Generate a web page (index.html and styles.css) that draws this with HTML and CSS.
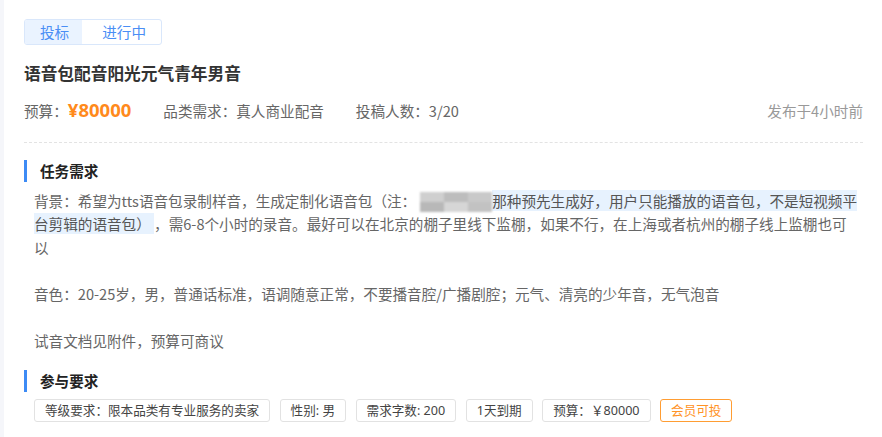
FILE: index.html
```html
<!DOCTYPE html>
<html lang="zh-CN">

<head>
    <meta charset="UTF-8">
    <meta name="viewport" content="width=device-width, initial-scale=1.0">
    <title>任务详情</title>
    <link rel="stylesheet" href="styles.css">
</head>

<body>
    <div class="card">
        <div class="tabs">
            <span class="tab active">投标</span>
            <span class="tab">进行中</span>
        </div>

        <h1 class="title">语音包配音阳光元气青年男音</h1>

        <div class="meta">
            <span class="meta-item">预算：<b class="price">¥80000</b></span>
            <span class="meta-item">品类需求：真人商业配音</span>
            <span class="meta-item">投稿人数：3/20</span>
            <span class="posted">发布于4小时前</span>
        </div>

        <h2 class="section-title">任务需求</h2>
        <div class="desc">
            <p>背景：希望为tts语音包录制样音，生成定制化语音包（注：<span class="mosaic"></span><span class="mark">那种预先生成好，用户只能播放的语音包，不是短视频平台剪辑的语音包）&nbsp;</span>，需6-8个小时的录音。最好可以在北京的棚子里线下监棚，如果不行，在上海或者杭州的棚子线上监棚也可以</p>
            <p>音色：20-25岁，男，普通话标准，语调随意正常，不要播音腔/广播剧腔；元气、清亮的少年音，无气泡音</p>
            <p>试音文档见附件，预算可商议</p>
        </div>

        <h2 class="section-title">参与要求</h2>
        <div class="tags">
            <span class="tag">等级要求：限本品类有专业服务的卖家</span>
            <span class="tag">性别: 男</span>
            <span class="tag">需求字数: 200</span>
            <span class="tag">1天到期</span>
            <span class="tag">预算：￥80000</span>
            <span class="tag vip">会员可投</span>
        </div>
    </div>
</body>

</html>
```

FILE: styles.css
```css
body {
    margin: 0;
    background-color: #f5f6fa;
    font-family: "Noto Sans CJK SC", sans-serif;
    color: #666;
}

.card {
    margin-left: 4px;
    min-height: 437px;
    box-sizing: border-box;
    background-color: #fff;
    padding: 19px 19px 0 20px;
}

.tabs {
    display: inline-flex;
    border: 1px solid #d9e7fb;
    border-radius: 3px;
    overflow: hidden;
}

.tab {
    font-size: 14.6px;
    line-height: 24px;
    color: #4a8ef5;
    padding: 0 15px 0 20px;
}

.tab.active {
    background-color: #eaf3ff;
    padding: 0 13px 0 15px;
}

.title {
    margin: 16px 0 0;
    font-size: 16.7px;
    line-height: 24px;
    font-weight: bold;
    color: #333;
}

.meta {
    display: flex;
    align-items: center;
    gap: 32px;
    margin-top: 13px;
    padding-bottom: 19px;
    border-bottom: 1px dashed #e3e3e3;
    font-size: 14.6px;
    line-height: 24px;
}

.meta-item {
    color: #666;
}

.price {
    font-family: "Noto Sans", sans-serif;
    font-size: 18.5px;
    font-weight: bold;
    color: #ff8a1c;
}

.posted {
    margin-left: auto;
    color: #999;
}

.section-title {
    margin: 17px 0 0;
    padding: 3px 0 3px 13px;
    border-left: 3px solid #3d8bf5;
    font-size: 14.6px;
    line-height: 16px;
    font-weight: bold;
    color: #222;
}

.section-title + .desc {
    margin-top: 7px;
}

.desc {
    padding: 0 3px 0 10px;
    font-size: 14.6px;
    line-height: 23.3px;
    color: #666;
}

.desc p {
    margin: 0 0 23.3px;
}

.desc p:last-child {
    margin-bottom: 0;
}

.desc + .section-title {
    margin-top: 18px;
}

/* 打码区域 */
.mosaic {
    display: inline-block;
    width: 72px;
    height: 20px;
    margin-left: 4px;
    vertical-align: -5px;
    background:
        linear-gradient(90deg, #cfcfcf 0 33%, #bdbdbd 33% 66%, #c9c9c9 66%) top / 100% 50% no-repeat,
        linear-gradient(90deg, #b8b8b8 0 33%, #d6d6d6 33% 66%, #c2c2c2 66%) bottom / 100% 50% no-repeat;
    filter: blur(1.2px);
}

.mark {
    background-color: #e7f2fe;
    color: #555;
}

.tags {
    display: flex;
    flex-wrap: wrap;
    gap: 9.5px;
    margin-top: 7px;
    padding-left: 10px;
}

.tag {
    font-family: "Noto Sans", "Noto Sans CJK SC", sans-serif;
    font-size: 12.6px;
    line-height: 21px;
    padding: 0 10px;
    border: 1px solid #e2e2e2;
    border-radius: 3px;
    color: #444;
}

.tag.vip {
    border-color: #ff9d33;
    color: #ff9326;
}
```
